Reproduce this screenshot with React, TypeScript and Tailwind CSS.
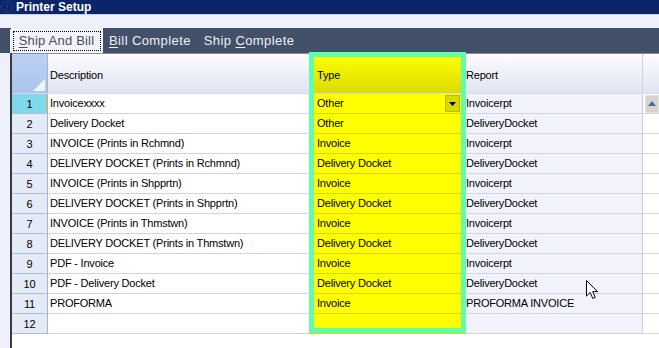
const ROWS: { desc: string; type: string; report: string }[] = [
  { desc: "Invoicexxxx", type: "Other", report: "Invoicerpt" },
  { desc: "Delivery Docket", type: "Other", report: "DeliveryDocket" },
  { desc: "INVOICE (Prints in Rchmnd)", type: "Invoice", report: "Invoicerpt" },
  { desc: "DELIVERY DOCKET (Prints in Rchmnd)", type: "Delivery Docket", report: "DeliveryDocket" },
  { desc: "INVOICE (Prints in Shpprtn)", type: "Invoice", report: "Invoicerpt" },
  { desc: "DELIVERY DOCKET (Prints in Shpprtn)", type: "Delivery Docket", report: "DeliveryDocket" },
  { desc: "INVOICE (Prints in Thmstwn)", type: "Invoice", report: "Invoicerpt" },
  { desc: "DELIVERY DOCKET (Prints in Thmstwn)", type: "Delivery Docket", report: "DeliveryDocket" },
  { desc: "PDF - Invoice", type: "Invoice", report: "Invoicerpt" },
  { desc: "PDF - Delivery Docket", type: "Delivery Docket", report: "DeliveryDocket" },
  { desc: "PROFORMA", type: "Invoice", report: "PROFORMA INVOICE" },
  { desc: "", type: "", report: "" },
];

const COLS = "grid grid-cols-[36px_261px_157px_177px_1fr]";

export default function App() {
  return (
    <div className="relative h-[348px] w-[659px] overflow-hidden bg-[#eef0fb] font-['Liberation_Sans',Arial,sans-serif] text-[11px] tracking-[-0.2px] text-black">
      {/* title bar */}
      <div className="flex h-[14px] items-center bg-[#0b246a] tracking-normal">
        <svg width="14" height="14" viewBox="0 0 14 14">
          <circle cx="6.5" cy="7" r="5.5" fill="none" stroke="#2b4079" strokeWidth="1" />
          <path d="M7.5 4v4.5a1.5 1.5 0 0 1-3 0" fill="none" stroke="#2b4079" strokeWidth="1" />
        </svg>
        <span className="ml-[2px] text-[12px] font-bold leading-none text-white">Printer Setup</span>
      </div>
      <div className="h-[1px] bg-[#c9d2ee]" />
      <div className="h-[13px]" />

      {/* tabs */}
      <div className="flex h-[25px] items-stretch bg-[#435069] pl-[10px] text-[13px] tracking-normal">
        <div className="relative flex w-[93px] items-center justify-center bg-[#f2f2fa]">
          <span className="absolute left-0 top-0 h-[1px] w-[1px] bg-[#333]" />
          <div className="flex h-[20px] w-[88px] items-center justify-center border border-dotted border-black tracking-[0.2px] text-[#4a4c60]">
            <span>
              <span className="underline underline-offset-2">S</span>hip And Bill
            </span>
          </div>
        </div>
        <div className="ml-[6px] flex items-center tracking-[0.4px] text-[#eef0f6]">
          <span>
            <span className="underline underline-offset-2">B</span>ill Complete
          </span>
        </div>
        <div className="ml-[13px] flex items-center tracking-[0.4px] text-[#eef0f6]">
          <span>
            Ship <span className="underline underline-offset-2">C</span>omplete
          </span>
        </div>
      </div>

      {/* grid area */}
      <div className="flex h-[295px]">
        <div className="box-content w-[11px] border-r-[2px] border-[#3a3a44]" />
        <div className="flex-1 bg-white">
          <div className="h-[1px] bg-[#8a8c98]" />
          {/* header */}
          <div className={`${COLS} h-[40px] border-b border-[#d6d8e4] bg-gradient-to-b from-[#fdfcff] to-[#e0e4f2]`}>
            <div className="relative border-r border-[#9db4dc] bg-gradient-to-b from-[#bcd0f2] to-[#acc4ec]">
              <svg width="12" height="12" viewBox="0 0 12 12" className="absolute bottom-[2px] right-[2px]">
                <path d="M12 0V12H0Z" fill="#eef3fd" />
              </svg>
            </div>
            <div className="flex items-center pl-[2px] pt-[3px]">Description</div>
            <div className="flex items-center bg-gradient-to-b from-[#ffff00] to-[#dcdc00] pl-[8px] pt-[3px]">Type</div>
            <div className="flex items-center border-r border-[#d0d0de] pt-[3px]">Report</div>
            <div />
          </div>
          {/* rows */}
          {ROWS.map((r, i) => (
            <div key={i} className={`${COLS} h-[20px]`}>
              <div
                className={
                  i === 0
                    ? "flex items-center justify-center border-b border-r border-b-[#a9bfe2] border-r-[#f0a040] bg-[#7fd8ec] pt-[2px]"
                    : "flex items-center justify-center border-b border-r border-b-[#a9bfe2] border-r-[#9db4dc] bg-[#e4ebf7] pt-[2px]"
                }
              >
                {i + 1}
              </div>
              <div className="flex items-center border-b border-[#d4d4d8] pl-[2px]">{r.desc}</div>
              <div className="flex items-center border-b border-[#d6d600] bg-[#ffff00] pl-[8px] pr-[6px]">
                <span className="flex-1">{r.type}</span>
                {i === 0 && (
                  <span className="flex h-[17px] w-[15px] items-center justify-center border border-[#b8b800] bg-[#dada00]">
                    <svg width="7" height="4" viewBox="0 0 7 4">
                      <path d="M0 0H7L3.5 4Z" fill="#000" />
                    </svg>
                  </span>
                )}
              </div>
              <div className="flex items-center border-b border-r border-b-[#d4d4de] border-r-[#cfcfdc] bg-[#f2f2fc]">
                {r.report}
              </div>
              <div className="flex items-center border-b border-[#d4d4de] pl-[2px]">
                {i === 0 && (
                  <span className="flex h-[18px] w-[14px] items-center justify-center border border-[#e4e2dc] bg-[#d8d4cc]">
                    <svg width="8" height="5" viewBox="0 0 8 5">
                      <path d="M4 0L8 5H0Z" fill="#4a6cb8" />
                    </svg>
                  </span>
                )}
              </div>
            </div>
          ))}
        </div>
      </div>

      {/* highlight annotation over the Type column */}
      <div className="pointer-events-none absolute left-[309px] top-[52px] h-[281px] w-[157px] border-[5px] border-[#62fcae]" />

      {/* mouse pointer */}
      <svg width="13" height="20" viewBox="0 0 13 20" className="absolute left-[586px] top-[280px]">
        <path d="M0.5 0.5V16L4.2 12.4L6.8 18.5L9.2 17.4L6.7 11.6H11.5Z" fill="#fff" stroke="#000" strokeWidth="1" />
      </svg>
    </div>
  );
}
